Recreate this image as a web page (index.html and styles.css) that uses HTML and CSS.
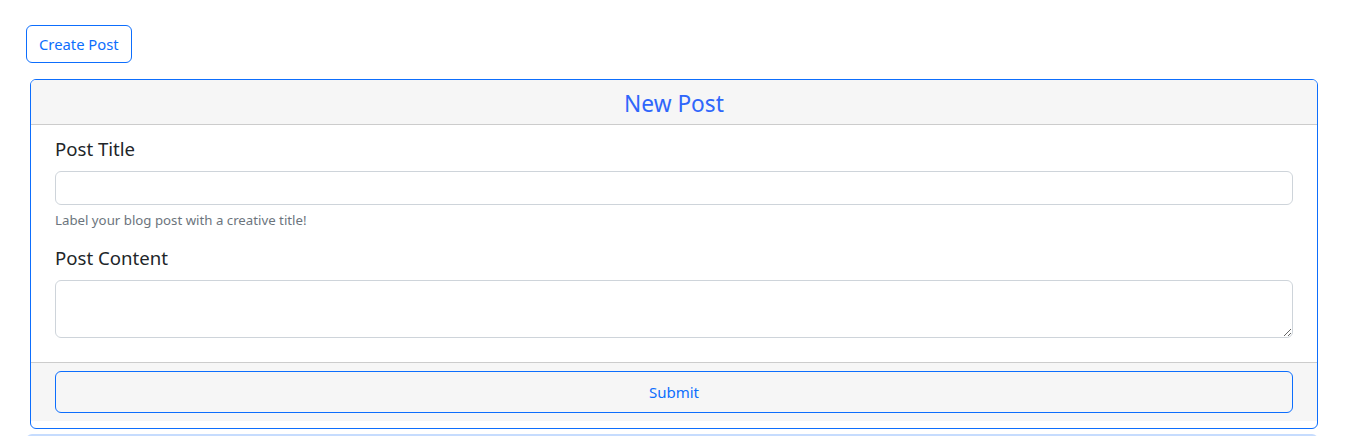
FILE: index.html
```html
<!DOCTYPE html>
<html lang="en">
<head>
<meta charset="utf-8">
<title>New Post</title>
<link rel="stylesheet" href="styles.css">
</head>
<body>
<div class="page">
  <button class="btn-outline" type="button">Create Post</button>
  <form class="card">
    <div class="card-header">New Post</div>
    <div class="card-body">
      <label class="field-label" for="title">Post Title</label>
      <input class="field-input" id="title" type="text">
      <div class="form-text">Label your blog post with a creative title!</div>
      <label class="field-label content-label" for="content">Post Content</label>
      <textarea class="field-area" id="content"></textarea>
    </div>
    <div class="card-footer">
      <button class="btn-submit" type="submit">Submit</button>
    </div>
  </form>
  <div class="next-card"></div>
</div>
</body>
</html>
```

FILE: styles.css
```css
* { box-sizing: border-box; }
html, body { margin: 0; padding: 0; background: #fff; }
body {
  font-family: "Noto Sans", "Open Sans", Arial, sans-serif;
  color: #212529;
  overflow: hidden;
}
.page {
  padding: 25px 31px 0 26px;
}
.btn-outline {
  display: block;
  height: 38px;
  padding: 0 12px;
  font-family: inherit;
  font-size: 14.8px;
  line-height: 36px;
  color: #0d6efd;
  background: #fff;
  border: 1px solid #0d6efd;
  border-radius: 6px;
}
.card {
  margin: 16px 0 0 4px;
  border: 1px solid #0d6efd;
  border-radius: 6px;
  overflow: hidden;
  padding-bottom: 7px;
}
.card-header {
  height: 45px;
  padding-top: 3px;
  background: #f6f6f6;
  border-bottom: 1px solid #cccccc;
  text-align: center;
  font-size: 22.7px;
  line-height: 41px;
  color: #2f66fb;
}
.card-body {
  padding: 12px 24px 24px 24px;
}
.field-label {
  display: block;
  font-size: 18.6px;
  line-height: 24px;
  color: #212529;
}
.content-label { margin-top: 15px; }
.field-input, .field-area {
  display: block;
  width: 100%;
  margin-top: 10px;
  border: 1px solid #ced4da;
  border-radius: 6px;
  background: #fff;
  font-family: inherit;
  font-size: 16px;
}
.field-input { height: 34px; }
.field-area { height: 58px; resize: vertical; }
.form-text {
  margin-top: 5px;
  font-size: 13.25px;
  line-height: 21px;
  color: #6c757d;
}
.card-footer {
  background: #f6f6f6;
  border-top: 1px solid #cccccc;
  padding: 8px 24px;
}
.btn-submit {
  display: block;
  width: 100%;
  height: 42px;
  font-family: inherit;
  font-size: 15px;
  color: #0d6efd;
  background: transparent;
  border: 1px solid #0d6efd;
  border-radius: 6px;
}
.next-card {
  margin: 5px 0 0 0;
  height: 8px;
  background: #c6dcfe;
  border-radius: 6px 6px 0 0;
}
```
